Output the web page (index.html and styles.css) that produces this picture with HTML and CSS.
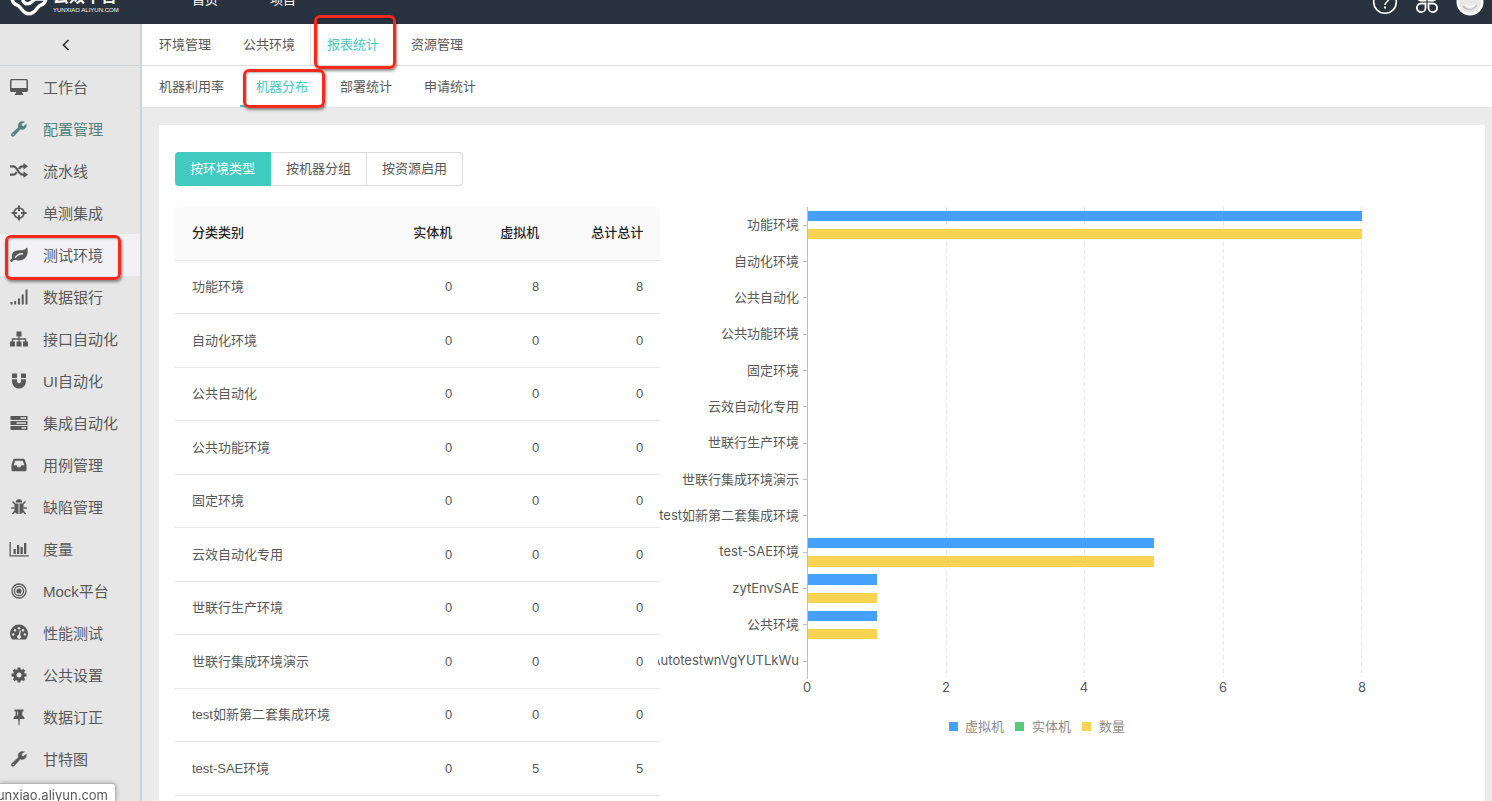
FILE: index.html
```html
<!DOCTYPE html>
<html lang="zh-CN">
<head>
<meta charset="utf-8">
<title>云效平台</title>
<link rel="stylesheet" href="styles.css">
</head>
<body>
<header class="topbar">
  <div class="topbar-inner">
    <a class="brand" href="#" aria-label="云效平台">
      <svg class="brand-mark" width="38" height="38" viewBox="0 0 38 38" fill="none" stroke="#fff" stroke-width="3.4" stroke-linejoin="round" stroke-linecap="round">
        <path d="M7 27C3.500 26 2 23 2 19s3-8 8-8c2-6 5-8 9-8s7 2 9 8c5 0 8 4 8 8s-1.500 7-5 8c-3 .5-4 5-8 7.500-3 2-5 2-8 0C11 32 10 27.500 7 27z"/>
        <path d="M13 23c2 3 5 3.500 8 1.500l4-3.500h9M13 19h8"/>
      </svg>
      <span class="brand-text"><b class="brand-name">云效平台</b><span class="brand-host">YUNXIAO ALIYUN.COM</span></span>
    </a>
    <nav class="mainnav"><a href="#">首页</a><a href="#">项目</a></nav>
    <div class="tools">
      <button class="tool" aria-label="帮助"><svg width="26" height="26" viewBox="0 0 26 26" fill="none" stroke="#fff" stroke-width="1.6"><circle cx="13" cy="13" r="11.3"/><path d="M9.500 10.500c0-5 7-5 7-.5 0 3-3.500 3-3.500 6"/><path d="M13 17.600v2" stroke-width="2"/></svg></button>
      <button class="tool" aria-label="应用"><svg width="26" height="26" viewBox="0 0 26 26" fill="none" stroke="#fff" stroke-width="1.800"><path d="M11.500 11.500H7A4.300 4.300 0 1 1 11.500 7zM14.500 11.500V7A4.300 4.300 0 1 1 19 11.500zM11.500 14.500V19A4.300 4.300 0 1 1 7 14.500zM14.500 14.500H19A4.300 4.300 0 1 1 14.500 19z"/></svg></button>
      <button class="tool" aria-label="用户"><svg width="28" height="28" viewBox="0 0 28 28"><circle cx="14" cy="14" r="13.500" fill="#fff"/><circle cx="14" cy="14" r="11" fill="#e9e9e9"/><path d="M7 18c4 5 10 5 14-1" fill="none" stroke="#bbb" stroke-width="1.300"/><path d="M10 17c3 3 6 2 8 0" fill="none" stroke="#fff" stroke-width="1.500"/></svg></button>
    </div>
  </div>
</header>
<div class="shell">
  <aside class="sidebar">
    <button class="collapse" aria-label="收起"><svg width="8" height="12" viewBox="0 0 8 12" fill="none" stroke="#333" stroke-width="1.700"><path d="M6.500 1 1.500 6l5 5"/></svg></button>
    <nav class="menu">
      <a href="#"><svg viewBox="0 0 18 18"><path fill-rule="evenodd" d="M1.500 1h15A1.500 1.500 0 0 1 18 2.500v10a1.500 1.500 0 0 1-1.500 1.500H12v1.500h1V17H5v-1.500h1V14H1.500A1.500 1.500 0 0 1 0 12.500v-10A1.500 1.500 0 0 1 1.500 1zm0 1.300V10h15V2.300z"/></svg>工作台</a>
      <a href="#" class="accent"><svg viewBox="0 0 18 18"><use href="#wrench"/></svg>配置管理</a>
      <a href="#"><svg viewBox="0 0 18 18"><path d="M0 4.300h3.500c3.700 0 4.800 8.400 9 8.400H14M0 12.700h3.500c1.500 0 2.500-1.200 3.300-2.700M9 7c.8-1.500 1.900-2.700 3.500-2.700H14" fill="none" stroke="currentColor" stroke-width="2.200"/><path d="M13.500 1 18 4.300l-4.500 3.400zM13.500 9.300l4.500 3.400-4.500 3.300z"/></svg>流水线</a>
      <a href="#"><svg viewBox="0 0 18 18"><circle cx="9" cy="9" r="5" fill="none" stroke="currentColor" stroke-width="1.700"/><path d="M8 1.500h2V7H8zM8 11h2v5.500H8zM1.500 8H7v2H1.500zM11 8h5.500v2H11z"/></svg>单测集成</a>
      <a href="#" class="active"><svg viewBox="0 0 18 18"><path fill-rule="evenodd" d="M17.300 2c1.500 5-.5 12.300-8.300 12.500-2 0-3.300-.8-4.800-.5-1 .3-1.500 2-2.700 2-.8 0-1.500-1-1.300-1.700.2-.8 1.800-1.500 1.700-2.500C1.200 6 5 4.300 10 4.200c3.500 0 4.500-.1 5.800-1.700.5-.6 1.200-1 1.500-.5zM12.500 7C9 7 7 8.500 5 10.800c-.5.7.3 1.500 1 .9C8 9.500 9.500 8.500 12.500 8.400c1 0 1-1.400 0-1.400z"/></svg>测试环境<span class="mark mark-menu"></span></a>
      <a href="#"><svg viewBox="0 0 18 18"><path d="M.5 14h2v2.500h-2zM4.200 13h2v3.500h-2zM8 10.500h2v6H8zM11.700 6.500h2v10h-2zM15.500 1.500h2v15h-2z"/></svg>数据银行</a>
      <a href="#"><svg viewBox="0 0 18 18"><path d="M6.500 1.500h5v5h-5zM0 11.500h5v5H0zM6.500 11.500h5v5h-5zM13 11.500h5v5h-5z"/><path d="M9 6v6M2.500 12V9h13v3" fill="none" stroke="currentColor" stroke-width="1.300"/></svg>接口自动化</a>
      <a href="#"><svg viewBox="0 0 18 18"><path d="M2 1.500h5V6H2zM11 1.500h5V6h-5zM2 7.200h5V9c0 3 4 3 4 0V7.200h5V9c0 10-14 10-14 0z"/></svg>UI自动化</a>
      <a href="#"><svg viewBox="0 0 18 18"><path fill-rule="evenodd" d="M.5 2h17v4H.5zm10 1.200v1.500H16V3.200zM.5 7h17v4H.5zm6 1.200v1.500H16V8.200zM.5 12h17v4H.5zm11 1.200v1.500H16v-1.500z"/></svg>集成自动化</a>
      <a href="#"><svg viewBox="0 0 18 18"><path fill-rule="evenodd" d="M4.500 2.800h9c.6 0 1 .3 1.200.8L16.500 9v5.200a1 1 0 0 1-1 1h-13a1 1 0 0 1-1-1V9l1.800-5.400c.2-.5.600-.8 1.200-.8zm.7 1.900L3.600 9.200h3l1 2h2.800l1-2h3l-1.600-4.500z"/></svg>用例管理</a>
      <a href="#"><svg viewBox="0 0 18 18"><path d="M5.800 4.500a3.200 3.200 0 0 1 6.400 0zM4.500 5.400h4V16c-2.500 0-4-1.500-4-4zM9.500 5.400h4V12c0 2.500-1.500 4-4 4z"/><path d="M5 6 2.500 3.500M13 6l2.500-2.500M4.500 10H1.200M13.500 10h3.300M5 13l-2.600 3M13 13l2.600 3" fill="none" stroke="currentColor" stroke-width="1.500"/></svg>缺陷管理</a>
      <a href="#"><svg viewBox="0 0 20 18" class="wide"><path d="M.5 2h1.300v13.200h18v1.300H.5zM4.500 9h2.300v5H4.500zM8 5h2.300v9H8zM11.500 7h2.300v7h-2.300zM15 3h2.300v11H15z"/></svg>度量</a>
      <a href="#"><svg viewBox="0 0 18 18"><g fill="none" stroke="currentColor" stroke-width="1.300"><circle cx="9" cy="9" r="7"/><circle cx="9" cy="9" r="4.600"/></g><circle cx="9" cy="9" r="2.600"/></svg>Mock平台</a>
      <a href="#"><svg viewBox="0 0 18 18"><path d="M2.200 15.500A9 9 0 1 1 15.800 15.500z"/><g fill="#e6e6e6"><circle cx="3.200" cy="10.500" r="1.200"/><circle cx="5" cy="6.200" r="1.200"/><circle cx="9" cy="4.300" r="1.200"/><circle cx="13" cy="6.200" r="1.200"/><circle cx="14.800" cy="10.500" r="1.200"/><path d="M9.800 6.500h1.200l-.8 4.700a2 2 0 1 1-1.500-.3z"/></g></svg>性能测试</a>
      <a href="#"><svg viewBox="0 0 18 18"><circle cx="9" cy="9" r="4.200" fill="none" stroke="currentColor" stroke-width="3.400"/><path d="M9 1.500v3M9 13.500v3M1.500 9h3M13.500 9h3M3.700 3.700l2 2M12.300 12.300l2 2M3.700 14.300l2-2M12.300 5.700l2-2" fill="none" stroke="currentColor" stroke-width="3"/></svg>公共设置</a>
      <a href="#"><svg viewBox="0 0 18 18"><path d="M4.500 1.500h9v2h-1.200V7.500c1.500.8 2.200 1.700 2.200 3.400H9.900L9.300 17.500h-.6l-.6-6.600H3.500c0-1.700.7-2.600 2.200-3.400V3.500H4.500z"/><path d="M7.600 3.500v4" stroke="#e6e6e6" stroke-width=".8"/></svg>数据订正</a>
      <a href="#"><svg viewBox="0 0 18 18"><path id="wrench" fill-rule="evenodd" d="M16.300 4.300c.6 2.700-1.300 5.200-4.100 5.200-.7 0-1.200-.1-1.800-.4L4.200 15.800c-1.900 1.700-4-.5-2.400-2.300L8.400 7.400C7.300 4 9.700 1.300 12.500 1.400c.9 0 1.500.2 2 .5L11.600 3.700V5.600l1.600.9zM2.600 14a.8.8 0 1 0 1.500 0 .8.8 0 0 0-1.500 0z" stroke="currentColor" stroke-width=".5"/></svg>甘特图</a>
    </nav>
  </aside>
  <main class="main">
    <nav class="tabs">
      <a href="#">环境管理</a><a href="#">公共环境</a><a href="#" class="current divided">报表统计<span class="mark mark-tab"></span></a><a href="#">资源管理</a>
    </nav>
    <nav class="tabs">
      <a href="#">机器利用率</a><a href="#" class="current underlined">机器分布<span class="mark mark-subtab"></span></a><a href="#">部署统计</a><a href="#">申请统计</a>
    </nav>
    <section class="card">
      <div class="segmented">
        <button class="on">按环境类型</button><button>按机器分组</button><button>按资源启用</button>
      </div>
      <div class="report">
        <table class="grid">
          <colgroup><col><col class="c-real"><col class="c-virtual"><col class="c-total"></colgroup>
          <thead><tr><th>分类类别</th><th>实体机</th><th>虚拟机</th><th>总计总计</th></tr></thead>
          <tbody>
            <tr><td>功能环境</td><td>0</td><td>8</td><td>8</td></tr>
            <tr><td>自动化环境</td><td>0</td><td>0</td><td>0</td></tr>
            <tr><td>公共自动化</td><td>0</td><td>0</td><td>0</td></tr>
            <tr><td>公共功能环境</td><td>0</td><td>0</td><td>0</td></tr>
            <tr><td>固定环境</td><td>0</td><td>0</td><td>0</td></tr>
            <tr><td>云效自动化专用</td><td>0</td><td>0</td><td>0</td></tr>
            <tr><td>世联行生产环境</td><td>0</td><td>0</td><td>0</td></tr>
            <tr><td>世联行集成环境演示</td><td>0</td><td>0</td><td>0</td></tr>
            <tr><td>test如新第二套集成环境</td><td>0</td><td>0</td><td>0</td></tr>
            <tr><td>test-SAE环境</td><td>0</td><td>5</td><td>5</td></tr>
          </tbody>
        </table>
        <svg class="chart" role="img" aria-label="机器分布">
          <g transform="translate(2 0)">
            <path class="gridline" d="M286.500 0V470M424.500 0V470M563.500 0V470M701.500 0V470"/>
            <g class="virtual">
              <rect x="148" y="4" width="554" height="10"/><rect x="148" y="331" width="346" height="10"/><rect x="148" y="367" width="69" height="11"/><rect x="148" y="404" width="69" height="10"/>
            </g>
            <g class="count">
              <rect x="148" y="22" width="554" height="10"/><rect x="148" y="349" width="346" height="11"/><rect x="148" y="386" width="69" height="10"/><rect x="148" y="422" width="69" height="10"/>
            </g>
            <path class="axis" d="M147.500 0V472M143 18.500h4M143 54.500h4M143 90.500h4M143 127.500h4M143 163.500h4M143 199.500h4M143 236.500h4M143 272.500h4M143 308.500h4M143 345.500h4M143 381.500h4M143 417.500h4M143 454.500h4"/>
            <g class="cats">
              <text x="139" y="22">功能环境</text><text x="139" y="59">自动化环境</text><text x="139" y="95">公共自动化</text><text x="139" y="131">公共功能环境</text><text x="139" y="168">固定环境</text><text x="139" y="204">云效自动化专用</text><text x="139" y="240">世联行生产环境</text><text x="139" y="277">世联行集成环境演示</text><text x="139" y="313">test如新第二套集成环境</text><text x="139" y="349">test-SAE环境</text><text x="139" y="386">zytEnvSAE</text><text x="139" y="422">公共环境</text><text x="139" y="458">AutotestwnVgYUTLkWu</text>
            </g>
            <g class="ticks">
              <text x="147" y="485">0</text><text x="286" y="485">2</text><text x="424" y="485">4</text><text x="563" y="485">6</text><text x="702" y="485">8</text>
            </g>
            <g class="legend">
              <rect class="virtual" x="289" y="515" width="9" height="9"/><text x="305" y="524">虚拟机</text>
              <rect class="real" x="355" y="515" width="9" height="9"/><text x="372" y="524">实体机</text>
              <rect class="count" x="422" y="515" width="9" height="9"/><text x="439" y="524">数量</text>
            </g>
          </g>
        </svg>
      </div>
    </section>
  </main>
</div>
<div class="status">yunxiao.aliyun.com</div>
</body>
</html>
```
FILE: styles.css
```css
* { box-sizing: border-box; }
body {
  margin: 0;
  height: 100vh;
  display: flex;
  flex-direction: column;
  overflow: hidden;
  background: #ecebec;
  color: #595959;
  font: 13px/20px "Liberation Sans", "Noto Sans CJK SC", sans-serif;
}
a { color: inherit; text-decoration: none; }
button { margin: 0; padding: 0; border: 0; background: none; color: inherit; font: inherit; }

.topbar { flex: none; height: 24px; display: flex; align-items: flex-end; overflow: hidden; background: #28333f; color: #fff; }
.topbar-inner { flex: 1; height: 48px; display: flex; align-items: center; }
.brand { display: flex; align-items: center; gap: 5px; width: 192px; padding: 4px 0 0 10px; }
.brand-mark { margin-top: -10px; }
.brand-text { display: flex; flex-direction: column; }
.brand-name { font-size: 16px; line-height: 16px; }
.brand-host { font-size: 6px; line-height: 10px; }
.mainnav { display: flex; gap: 52px; }
.tools { display: flex; align-items: center; gap: 16px; margin-left: auto; padding: 3px 8px 0 0; }
.tool { display: flex; }

.shell { flex: 1; display: flex; min-height: 0; }
.sidebar { flex: none; width: 142px; overflow: hidden; background: #e6e6e6; border-right: 2px solid #cdd3d6; }
.collapse { display: flex; align-items: center; justify-content: center; width: 100%; height: 42px; padding-right: 8px; border-bottom: 1px solid #cdd3d6; }
.menu { font-size: 15px; }
.menu a { position: relative; display: flex; align-items: center; gap: 14px; height: 42px; padding: 1px 0 0 10px; }
.menu svg { flex: none; width: 18px; height: 18px; margin: 0 1px 2px 0; fill: currentColor; }
.menu svg.wide { width: 20px; margin: 0 0 2px -1px; }
.menu .accent { color: #4f827b; }
.menu .active { background: #f2f2f6; }

.main { flex: 1; min-width: 0; display: flex; flex-direction: column; }
.tabs { flex: none; display: flex; height: 42px; padding-left: 1px; background: #fff; border-bottom: 1px solid #dde0e2; }
.tabs a { position: relative; display: flex; align-items: center; padding: 0 16px; }
.tabs .current { color: #45c9c0; }
.tabs .divided { box-shadow: -1px 0 #e0e0e0; }
.tabs .underlined { border-bottom: 2px solid #45c9c0; padding-top: 2px; }

.mark { position: absolute; border: 3px solid #f5291c; border-radius: 6px; box-shadow: 1px 2px 3px rgba(0, 0, 0, .45), inset 1px 1px 2px rgba(0, 0, 0, .3); pointer-events: none; z-index: 1; }
.mark-tab { inset: -9px -1px -4px 3px; }
.mark-subtab { inset: 3px -1px -3px 3px; }
.mark-menu { inset: 1px 19px -4px 5px; }

.card { flex: 1; min-height: 0; overflow: hidden; margin: 17px 7px 0 17px; padding: 27px 16px 0; background: #fff; }
.segmented { display: flex; }
.segmented button { height: 34px; padding: 0 15px; border: 1px solid #d9d9d9; border-left-width: 0; }
.segmented .on { border-color: #40cac0; background: #40cac0; color: #fff; border-radius: 4px 0 0 4px; }
.segmented button:last-child { border-radius: 0 4px 4px 0; }

.report { display: grid; grid-template-columns: minmax(0, 3fr) minmax(0, 5fr); margin-top: 21px; }
.grid { width: 100%; align-self: start; table-layout: fixed; border-collapse: separate; border-spacing: 0; }
.c-real { width: 120px; }
.c-virtual { width: 87px; }
.c-total { width: 104px; }
.grid th, .grid td { height: 53px; padding: 0 17px; border-bottom: 1px solid #e6e6e6; text-align: right; }
.grid th { height: 54px; padding-bottom: 1px; background: #fafafa; color: #262626; font-weight: 500; }
.grid tbody tr:nth-child(even) td { height: 54px; }
.grid th:first-child, .grid td:first-child { text-align: left; }
.grid th:first-child { border-top-left-radius: 4px; }
.grid th:last-child { border-top-right-radius: 4px; }

.chart { display: block; width: calc(100% + 2px); height: 560px; margin-left: -2px; font-family: Inter, "Noto Sans CJK SC", sans-serif; }
.chart text { fill: #595959; }
.cats { text-anchor: end; }
.ticks { text-anchor: middle; }
.chart .legend text { fill: #8c8c8c; }
.gridline { stroke: #e8e8e8; stroke-dasharray: 4 3; }
.axis { fill: none; stroke: #bfbfbf; }
.virtual { fill: #45a1fc; }
.real { fill: #5ac878; }
.count { fill: #fbd353; }

.status { position: fixed; left: 0; bottom: 0; display: flex; justify-content: flex-end; width: 116px; height: 18px; padding: 1px 7px 0 0; overflow: hidden; background: #fff; border: 1px solid #b5b5b5; border-width: 1px 1px 0 0; border-radius: 0 4px 0 0; box-shadow: 0 0 4px rgba(0, 0, 0, .3); font-family: Inter, sans-serif; z-index: 2; }
```
